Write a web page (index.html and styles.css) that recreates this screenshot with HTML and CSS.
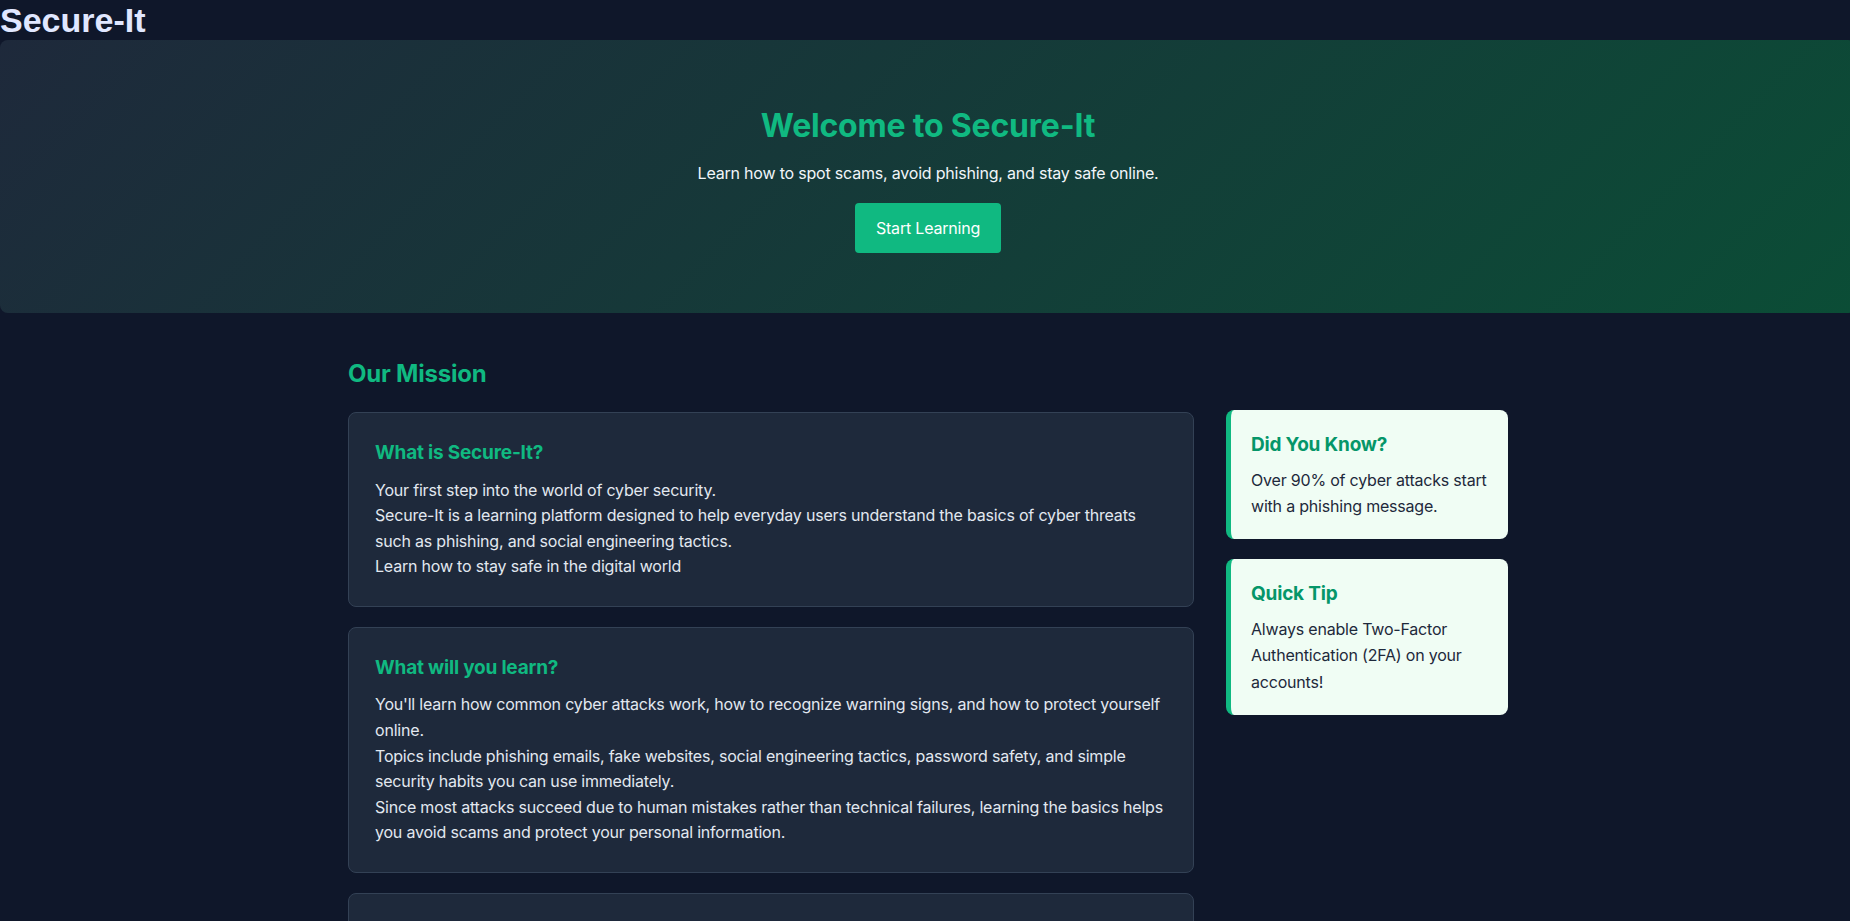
FILE: index.html
```html
<!DOCTYPE html>
<html lang="en">
<head>
    <meta charset="UTF-8">
    <meta name="viewport" content="width=device-width, initial-scale=1.0">
    <title>Secure-It</title>
    <link rel="stylesheet" href="styles.css">
</head>

<body>
<div class="page">
    <header class="site-header">
        <h1 class="logo">Secure-It</h1>
    </header>

    <section class="hero">
        <h2>Welcome to Secure-It</h2>
        <p>Learn how to spot scams, avoid phishing, and stay safe online.</p>
        <button class="btn">Start Learning</button>
    </section>

    <main class="container">
        <h2 class="section-title">Our Mission</h2>
        <div class="layout">
            <div class="main-col">
                <div class="card">
                    <h3>What is Secure-It?</h3>
                    <p>
                        Your first step into the world of cyber security.<br>
                        Secure-It is a learning platform designed to help everyday users understand the basics of cyber threats such as phishing, and social engineering tactics.<br>
                        Learn how to stay safe in the digital world
                    </p>
                </div>
                <div class="card">
                    <h3>What will you learn?</h3>
                    <p>
                        You'll learn how common cyber attacks work, how to recognize warning signs, and how to protect yourself online.<br>
                        Topics include phishing emails, fake websites, social engineering tactics, password safety, and simple security habits you can use immediately.<br>
                        Since most attacks succeed due to human mistakes rather than technical failures, learning the basics helps you avoid scams and protect your personal information.
                    </p>
                </div>
                <div class="card">
                    <h3>Who is it for?</h3>
                    <p>
                        Anyone who uses the internet. No technical background is needed.
                    </p>
                </div>
            </div>

            <aside class="side-col">
                <div class="tip-card">
                    <h3>Did You Know?</h3>
                    <p>Over 90% of cyber attacks start with a phishing message.</p>
                </div>
                <div class="tip-card">
                    <h3>Quick Tip</h3>
                    <p>Always enable Two-Factor Authentication (2FA) on your accounts!</p>
                </div>
            </aside>
        </div>
    </main>
</div>
</body>
</html>
```

FILE: styles.css
```css
body {
    font-family: Inter, 'Noto Sans', sans-serif;
    background-color: #0f172a;
    color: #e2e8f0;
    margin: 0;
    padding: 0;
    line-height: 1.6;
    letter-spacing: -0.2px;
    overflow-x: hidden;
}

/* the page is a little wider than the window */
.page {
    width: calc(100% + 6px);
}

.logo {
    font-family: 'Liberation Sans', Arial, sans-serif;
    font-size: 34px;
    font-weight: 700;
    letter-spacing: 0;
    color: #e0e7ff;
    margin: 0;
    line-height: 40px;
}

/* hero banner */
.hero {
    padding: 60px 0;
    text-align: center;
    border-radius: 8px;
    background: linear-gradient(135deg, #1e293b 0%, #0b4d36 100%);
}

.hero h2 {
    font-size: 32px;
    font-weight: 700;
    color: #10b981;
    margin: 0 0 10px;
    line-height: 1.6;
}

.hero p {
    font-size: 16px;
    margin: 0 0 16px;
    color: #f1f5f9;
}

.btn {
    font-family: inherit;
    font-size: 16px;
    letter-spacing: -0.2px;
    line-height: 24px;
    background-color: #10b981;
    color: #fff;
    border: none;
    padding: 13px 21px;
    border-radius: 4px;
    cursor: pointer;
}

.btn:hover {
    background-color: #059669;
}

/* content */
.container {
    max-width: 1160px;
    margin: 42px auto 0;
    padding: 0 20px;
}

.section-title {
    font-size: 24px;
    font-weight: 700;
    color: #10b981;
    margin: 0 0 19px;
}

.layout {
    display: grid;
    grid-template-columns: 3fr 1fr;
    gap: 32px;
    align-items: start;
}

.card {
    background-color: #1e293b;
    border: 1px solid #334155;
    border-radius: 8px;
    padding: 25px 26px 26px;
    margin-bottom: 20px;
}

.card h3 {
    font-size: 19px;
    font-weight: 700;
    color: #10b981;
    margin: 0 0 9px;
}

.card p {
    margin: 0;
    font-size: 16px;
    color: #e2e8f0;
}

.side-col {
    display: flex;
    flex-direction: column;
    gap: 20px;
    margin-top: -2px;
}

.tip-card {
    background-color: #f0fdf4;
    border-left: 5px solid #10b981;
    border-radius: 8px;
    padding: 20px;
}

.tip-card h3 {
    font-size: 19px;
    font-weight: 700;
    color: #059669;
    margin: 0 0 6px;
}

.tip-card p {
    margin: 0;
    font-size: 16px;
    line-height: 1.65;
    color: #1e293b;
}
```
